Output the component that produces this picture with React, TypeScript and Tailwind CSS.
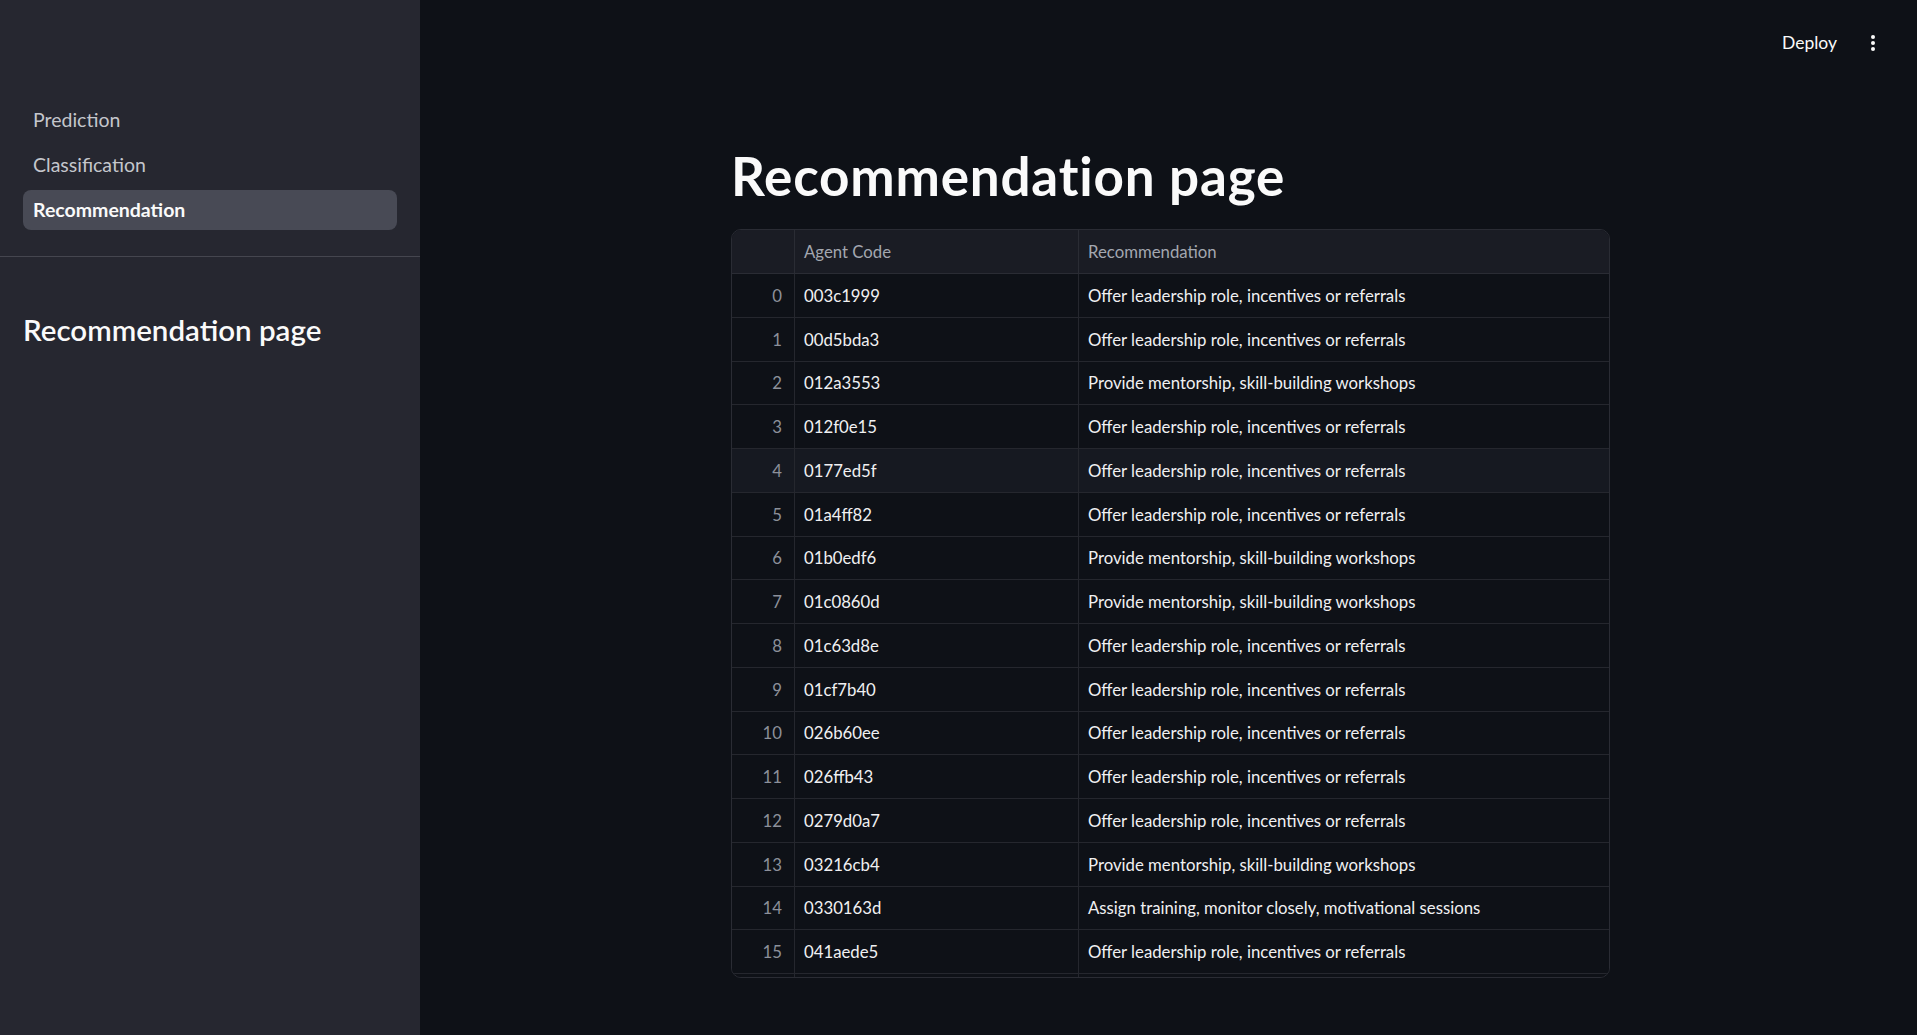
import React from "react";

const OFFER = "Offer leadership role, incentives or referrals";
const PROVIDE = "Provide mentorship, skill-building workshops";
const ASSIGN = "Assign training, monitor closely, motivational sessions";

const rows: [string, string][] = [
  ["003c1999", OFFER],
  ["00d5bda3", OFFER],
  ["012a3553", PROVIDE],
  ["012f0e15", OFFER],
  ["0177ed5f", OFFER],
  ["01a4ff82", OFFER],
  ["01b0edf6", PROVIDE],
  ["01c0860d", PROVIDE],
  ["01c63d8e", OFFER],
  ["01cf7b40", OFFER],
  ["026b60ee", OFFER],
  ["026ffb43", OFFER],
  ["0279d0a7", OFFER],
  ["03216cb4", PROVIDE],
  ["0330163d", ASSIGN],
  ["041aede5", OFFER],
];

function MoreVert() {
  return (
    <svg width="24" height="24" viewBox="0 0 24 24" fill="#fafafa">
      <circle cx="12" cy="6" r="2" />
      <circle cx="12" cy="12" r="2" />
      <circle cx="12" cy="18" r="2" />
    </svg>
  );
}

export default function App() {
  return (
    <div
      className="flex h-[1035px] w-full overflow-hidden bg-[#0e1117] text-[#fafafa]"
      style={{ fontFamily: "Lato, 'Noto Sans', sans-serif" }}
    >
      {/* Sidebar */}
      <aside className="flex h-full w-[420px] shrink-0 flex-col bg-[#262730]">
        <nav className="flex flex-col gap-[5px] border-b border-[#45464f] px-[23px] pb-[26px] pt-[100px]">
          <div className="flex h-10 items-center rounded-[8px] px-[10px] text-[19.5px] text-[#c4c6cc]">
            Prediction
          </div>
          <div className="flex h-10 items-center rounded-[8px] px-[10px] text-[19.5px] text-[#c4c6cc]">
            Classification
          </div>
          <div className="flex h-10 items-center rounded-[8px] bg-[#484a55] px-[10px] text-[19.5px] font-bold text-[#fafafa]">
            Recommendation
          </div>
        </nav>
        <div className="px-[23px] pt-[55px]">
          <h2 className="text-[29.5px] font-semibold leading-[1.2] text-[#fafafa]">
            Recommendation page
          </h2>
        </div>
      </aside>

      {/* Main */}
      <main className="flex h-full min-w-0 flex-1 flex-col">
        <header className="flex h-[86px] shrink-0 items-center justify-end gap-[24px] pr-[32px]">
          <span className="text-[17.5px] text-[#fafafa]">Deploy</span>
          <MoreVert />
        </header>
        <div className="pl-[311px] pt-[60px]">
          <h1 className="text-[53px] font-bold leading-[60px] tracking-[0.8px] text-[#fafafa]">
            Recommendation page
          </h1>
          <div className="mt-[23px] h-[749px] w-[879px] overflow-hidden rounded-[10px] border border-[#2a2c34] text-[16.75px]">
            <div className="grid h-[44px] grid-cols-[63px_284px_1fr] border-b border-[#2a2c34] bg-[#1a1c24] text-[#a3a7b0]">
              <div className="border-r border-[#2a2c34]" />
              <div className="flex items-center border-r border-[#2a2c34] px-[9px]">Agent Code</div>
              <div className="flex items-center px-[9px]">Recommendation</div>
            </div>
            {rows.map(([code, rec], i) => (
              <div
                key={i}
                className={
                  "grid h-[43.75px] grid-cols-[63px_284px_1fr] border-b border-[#25272e] " +
                  (i === 4 ? "bg-[#161921]" : "bg-[#0e1117]")
                }
              >
                <div className="flex items-center justify-end border-r border-[#25272e] pr-[12px] text-[#8c909a]">
                  {i}
                </div>
                <div className="flex items-center border-r border-[#25272e] px-[9px] text-[#f0f0f2]">
                  {code}
                </div>
                <div className="flex items-center px-[9px] text-[#f0f0f2]">{rec}</div>
              </div>
            ))}
            <div className="grid h-[43.75px] grid-cols-[63px_284px_1fr] bg-[#0e1117]">
              <div className="border-r border-[#25272e]" />
              <div className="border-r border-[#25272e]" />
              <div />
            </div>
          </div>
        </div>
      </main>
    </div>
  );
}
